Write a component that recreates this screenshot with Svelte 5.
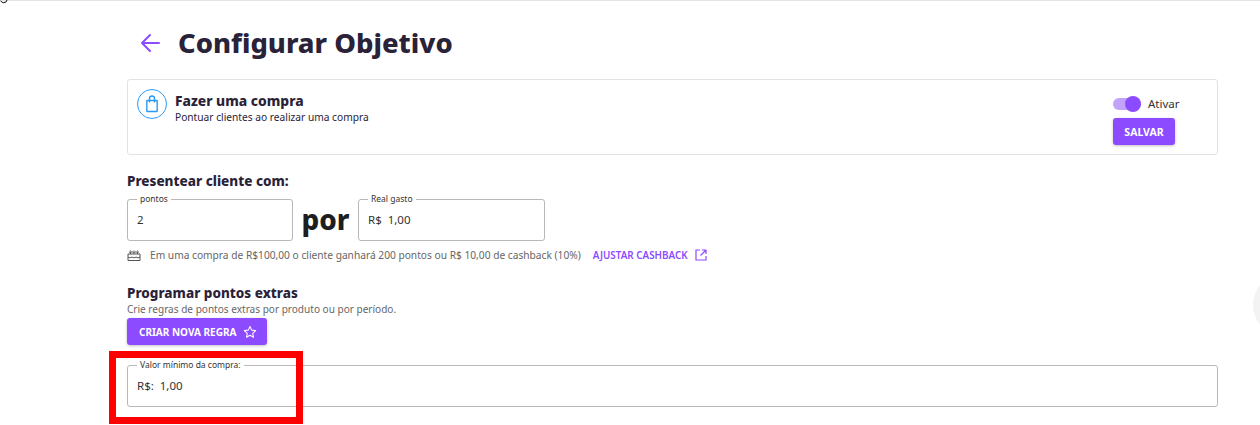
<script>
  let active = true;
</script>

<div class="topline"></div>
<svg class="cursor" width="8" height="4" viewBox="0 0 8 4"><path d="M0.5 1 Q3 4 6 2 L7 0" fill="none" stroke="#111" stroke-width="1" /></svg>

<main class="page">
  <header class="head">
    <button class="back" aria-label="Voltar">
      <svg width="24" height="24" viewBox="0 0 24 24"><path d="M21 12H4M12 4l-8 8 8 8" fill="none" stroke="#8c4bff" stroke-width="2" stroke-linecap="round" stroke-linejoin="round" /></svg>
    </button>
    <h1>Configurar Objetivo</h1>
  </header>

  <section class="card">
    <div class="goal">
      <span class="goal-icon">
        <svg width="18" height="18" viewBox="0 0 18 18"><path d="M3.800 5.500h10.400v10.200a.8.8 0 0 1-.8.8H4.600a.8.8 0 0 1-.8-.8zM6.500 7.500V3.500a2.500 2.500 0 0 1 5 0v4" fill="none" stroke="#2b9af3" stroke-width="1.400" stroke-linejoin="round" /></svg>
      </span>
      <div>
        <h2>Fazer uma compra</h2>
        <p>Pontuar clientes ao realizar uma compra</p>
      </div>
    </div>
    <div class="actions">
      <label class="toggle">
        <input type="checkbox" bind:checked={active} />
        <span class="track"><span class="thumb"></span></span>
        <span class="toggle-text">Ativar</span>
      </label>
      <button class="btn save">SALVAR</button>
    </div>
  </section>

  <h3 class="gift-title">Presentear cliente com:</h3>
  <div class="points-row">
    <fieldset class="field small">
      <legend>pontos</legend>
      <span>2</span>
    </fieldset>
    <span class="por">por</span>
    <fieldset class="field spent">
      <legend>Real gasto</legend>
      <span>R$&nbsp; 1,00</span>
    </fieldset>
  </div>

  <div class="info">
    <svg width="14" height="14" viewBox="0 0 14 14"><path d="M1 6h12v6.500H1zM1 9c1.500 1 2.500 1 4 0 1.500 1 2.500 1 4 0 1.500 1 2.500 1 4 0M3.500 6V4M7 6V4M10.500 6V4M3.500 2v.5M7 2v.5M10.500 2v.5M2 4h10" fill="none" stroke="#555" stroke-width="1" /></svg>
    <span class="info-text">Em uma compra de R$100,00 o cliente ganhará 200 pontos ou R$ 10,00 de cashback (10%)</span>
    <a class="adjust" href="#top">AJUSTAR CASHBACK
      <svg width="12" height="12" viewBox="0 0 12 12"><path d="M5 1H1v10h10V7M7 1h4v4M11 1 5.500 6.500" fill="none" stroke="#8c4bff" stroke-width="1.200" /></svg>
    </a>
  </div>

  <h3 class="extra-title">Programar pontos extras</h3>
  <p class="extra-sub">Crie regras de pontos extras por produto ou por período.</p>
  <button class="btn create">CRIAR NOVA REGRA
    <svg width="14" height="14" viewBox="0 0 24 24"><path d="M12 2.500l2.900 6.300 6.800.8-5 4.700 1.300 6.800-6-3.400-6 3.400 1.300-6.800-5-4.700 6.800-.8z" fill="none" stroke="#fff" stroke-width="1.800" stroke-linejoin="round" /></svg>
  </button>

  <fieldset class="field minimum">
    <legend>Valor mínimo da compra:</legend>
    <span>R$:&nbsp; 1,00</span>
  </fieldset>
</main>

<div class="highlight"></div>
<div class="float"></div>

<style>
  :global(body) {
    margin: 0;
    background: #fff;
    overflow: hidden;
    font-family: "Noto Sans", "Open Sans", sans-serif;
    color: #2a2238;
  }
  .topline { height: 1px; background: #e4e4e4; }
  .cursor { position: absolute; left: 0; top: 0; }
  .page { width: 1091px; margin-left: 127px; }
  .head { display: flex; align-items: center; height: 78px; padding: 5px 0 0 11px; gap: 16px; box-sizing: border-box; }
  .back { background: none; border: 0; padding: 0; display: flex; }
  h1 { margin: 0; font-size: 27.400px; line-height: 36px; font-weight: 800; color: #2a2238; }

  .card {
    display: flex;
    justify-content: space-between;
    height: 76px;
    box-sizing: border-box;
    border: 1px solid #e2e2e2;
    border-radius: 3px;
    padding: 9px 42px 0 9px;
  }
  .goal { display: flex; gap: 8px; }
  .goal-icon {
    width: 28px; height: 28px; border: 1px solid #2b9af3; border-radius: 50%;
    display: flex; align-items: center; justify-content: center;
  }
  h2 { margin: 3px 0 0; font-size: 13.800px; line-height: 18px; font-weight: 800; color: #2a2238; }
  .goal p { margin: 0; font-size: 10.200px; line-height: 14px; }

  .actions { display: flex; flex-direction: column; align-items: flex-start; gap: 6px; padding-top: 6px; width: 62px; }
  .toggle { display: flex; align-items: center; gap: 7px; height: 17px; white-space: nowrap; }
  .toggle input { display: none; }
  .track { display: block; position: relative; width: 28px; height: 12px; border-radius: 6px; background: #c2a3fb; }
  .thumb { position: absolute; right: 0; top: -2px; width: 16px; height: 16px; border-radius: 50%; background: #8c4bff; }
  .toggle-text { font-size: 11.500px; color: #333; }

  .btn {
    border: 0; border-radius: 3px; background: #8c4bff; color: #fff;
    font-family: inherit; font-weight: 700; font-size: 10px;
    box-shadow: 0 1px 3px rgba(0,0,0,.25);
  }
  .save { width: 62px; height: 27px; padding: 0; font-size: 10.500px; }

  .gift-title { margin: 17px 0 0; font-size: 13.500px; line-height: 18px; font-weight: 800; }
  .points-row { display: flex; align-items: center; margin-top: 4px; }
  .field {
    margin: 0; box-sizing: border-box; height: 47px;
    border: 1px solid #b8b8b8; border-radius: 3px;
    padding: 8px 9px 0; font-size: 11.500px; color: #333;
    min-width: 0;
  }
  .field legend { font-size: 8.500px; line-height: 10px; padding: 0 3px; color: #333; }
  .small { width: 166px; }
  .spent { width: 187px; }
  .por { width: 65px; text-align: center; font-size: 27.800px; font-weight: 800; color: #1e1e1e; line-height: 36px; padding-top: 2px; }

  .info { display: flex; align-items: center; height: 16px; margin-top: 6px; font-size: 10.200px; color: #666; }
  .info-text { margin-left: 9px; }
  .adjust { display: flex; align-items: center; gap: 7px; margin-left: 12px; font-size: 9.900px; font-weight: 600; color: #8c4bff; text-decoration: none; }

  .extra-title { margin: 21px 0 0; font-size: 13.500px; line-height: 18px; font-weight: 800; }
  .extra-sub { margin: 0; font-size: 10.050px; line-height: 14px; color: #666; }
  .create { display: flex; align-items: center; gap: 7px; height: 27px; width: 140px; padding: 0 0 0 12px; margin-top: 2px; white-space: nowrap; }

  .minimum { width: 100%; margin-top: 15px; padding-left: 9px; }

  .highlight {
    position: absolute; left: 109px; top: 351px; width: 194px; height: 73px;
    box-sizing: border-box; border: 7px solid #fe0000; pointer-events: none;
  }
  .float {
    position: absolute; left: 1253px; top: 274px; width: 60px; height: 62px;
    border-radius: 50%; background: #f3f3f3;
  }
</style>
